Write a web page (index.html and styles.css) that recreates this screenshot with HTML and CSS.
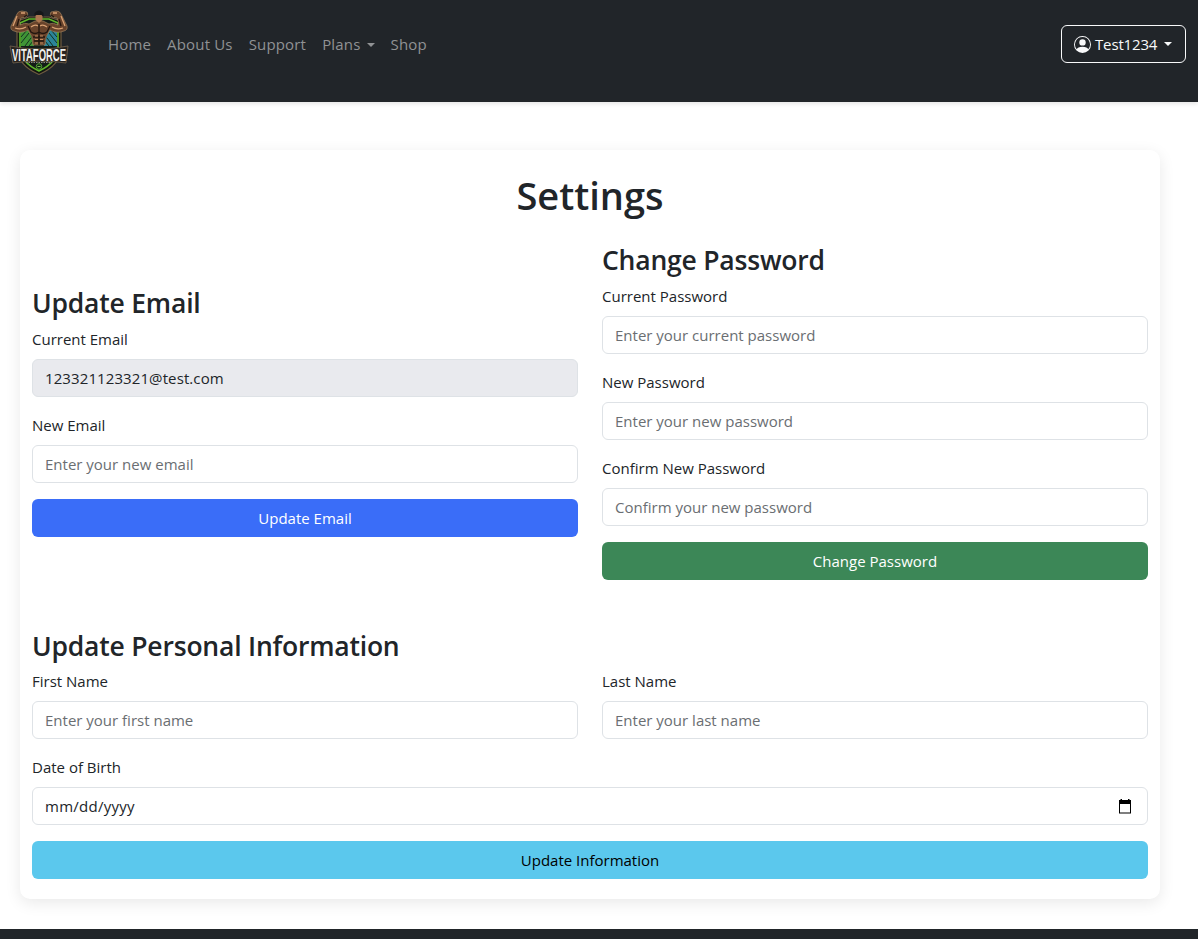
FILE: index.html
```html
<!DOCTYPE html>
<html lang="en">
<head>
<meta charset="utf-8">
<title>Settings</title>
<link rel="stylesheet" href="styles.css">
</head>
<body>
<header class="navbar">
  <a class="brand" href="#">
    <svg class="logo" viewBox="0 0 60 66" width="60" height="66">
      <path d="M8 12 L20 8 H40 L52 12 V38 Q52 56 30 65.500 Q8 56 8 38 Z" fill="#11170f" stroke="#6f5a40" stroke-width="1.2"/>
      <path d="M11 14 L20 10 H40 L49 14 V38 Q49 53 30 62 Q11 53 11 38 Z" fill="#131c17" stroke="#5fb62b" stroke-width="1.600"/>
      <path d="M12 22 L20 20 L25 37 H12 Z" fill="#3f9436"/>
      <path d="M48 22 L40 20 L35 37 H48 Z" fill="#2b8499"/>
      <path d="M12 34l8-10M12 28l6-7M16 37l6-8M20 37l4-5M48 34l-8-10M48 28l-6-7M44 37l-6-8M40 37l-4-5" stroke="#14301f" stroke-width="1"/>
      <path d="M8 5 Q9 2 13 2 L18 3 Q20 5 17 8 L12 9 Q10 12 11 16 Q16 13 20 15 L26 12 H34 L40 15 Q44 13 49 16 Q50 12 48 9 L43 8 Q40 5 42 3 L47 2 Q51 2 52 5 L58 17 Q59 21 55 22 Q48 25 41 21 L37 28 L36 36 H24 L23 28 L19 21 Q12 25 5 22 Q1 21 2 17 Z" fill="#68432b" stroke="#a98a63" stroke-width=".6"/>
      <path d="M8 7L4 17M52 7l4 10M6 19q6 2 11-1M54 19q-6 2-11-1M22 18q4-3 7-1M38 18q-4-3-7-1M12 4h4M48 4h-4" fill="none" stroke="#d9a173" stroke-width="1.3"/>
      <path d="M10 10L8 17M50 10l2 7M19 17l3 6q4 3 8 0 4 3 8 0l3-6M30 15v21M24 28h12M25 32h10M18 6l-3 2M42 6l3 2" fill="none" stroke="#22160f" stroke-width="1.3"/>
      <path d="M26 27h3M31 27h3M26 30.500h3M31 30.500h3M26 34h3M31 34h3" stroke="#c48b5e" stroke-width="1.2"/>
      <path d="M26.500 4h7v7L30 14l-3.500-3z" fill="#ad7750"/>
      <path d="M25.500 7V4q4.500-5 9 0v4l-2-2h-5z" fill="#151719"/>
      <path d="M1 37 Q30 43 59 37 L57 54 Q30 50 4 54 Z" fill="#28231f" stroke="#74634e" stroke-width=".8"/>
      <text class="logo-name" x="3" y="51.500" textLength="54" lengthAdjust="spacingAndGlyphs">VITAFORCE</text>
      <path d="M17 53.500h26" stroke="#8a877e" stroke-width="1" stroke-dasharray="1.500 1"/>
      <circle cx="30" cy="57.500" r="2.800" fill="#102c13" stroke="#519e34"/>
      <path d="M28.500 57.500h3" stroke="#7bbb50"/>
    </svg>
  </a>
  <nav class="nav">
    <a class="nav-link" href="#">Home</a>
    <a class="nav-link" href="#">About Us</a>
    <a class="nav-link" href="#">Support</a>
    <a class="nav-link caret" href="#">Plans</a>
    <a class="nav-link" href="#">Shop</a>
  </nav>
  <button class="user caret">
    <svg width="17" height="17" viewBox="0 0 16 16" fill="currentColor"><path d="M11 6a3 3 0 1 1-6 0 3 3 0 0 1 6 0"/><path fill-rule="evenodd" d="M0 8a8 8 0 1 1 16 0A8 8 0 0 1 0 8m8-7a7 7 0 0 0-5.468 11.37C3.242 11.226 4.805 10 8 10s4.757 1.225 5.468 2.37A7 7 0 0 0 8 1"/></svg>
    <span>Test1234</span>
  </button>
</header>
<main class="card">
  <h1 class="title">Settings</h1>
  <div class="columns">
    <section>
      <h2 class="heading">Update Email</h2>
      <label class="label">Current Email</label>
      <input class="field disabled" value="123321123321@test.com" readonly>
      <label class="label">New Email</label>
      <input class="field" placeholder="Enter your new email">
      <button class="btn primary">Update Email</button>
    </section>
    <section>
      <h2 class="heading">Change Password</h2>
      <label class="label">Current Password</label>
      <input class="field" placeholder="Enter your current password">
      <label class="label">New Password</label>
      <input class="field" placeholder="Enter your new password">
      <label class="label">Confirm New Password</label>
      <input class="field" placeholder="Confirm your new password">
      <button class="btn success">Change Password</button>
    </section>
  </div>
  <section class="personal">
    <h2 class="heading">Update Personal Information</h2>
    <div class="columns">
      <div>
        <label class="label">First Name</label>
        <input class="field" placeholder="Enter your first name">
      </div>
      <div>
        <label class="label">Last Name</label>
        <input class="field" placeholder="Enter your last name">
      </div>
    </div>
    <label class="label">Date of Birth</label>
    <div class="field date">
      <span>mm/dd/yyyy</span>
      <svg width="12" height="15" viewBox="0 0 12 15"><path d="M1.500 0h1.500v1h6V0h1.500v1H12v13.500H0V1h1.500zM1 5v8.500h10V5z" fill="#000" fill-rule="evenodd"/></svg>
    </div>
    <button class="btn info">Update Information</button>
  </section>
</main>
<footer class="footer"></footer>
</body>
</html>
```
FILE: styles.css
```css
* { box-sizing: border-box; }
body {
  margin: 0;
  height: 939px;
  overflow: hidden;
  background: #fff;
  color: #212529;
  font: 400 15px/24px "Open Sans", "Noto Sans", sans-serif;
}
.navbar {
  display: flex;
  align-items: flex-start;
  height: 102px;
  padding: 9px 12px 0 9px;
  background: #212529;
  box-shadow: 0 2px 4px rgba(0, 0, 0, .1);
}
.brand { display: flex; width: 91px; }
.logo { overflow: visible; }
.logo-name { font: 700 17px/20px "Liberation Sans", sans-serif; fill: #f1f0ed; }
.nav { display: flex; flex: 1; padding-top: 15px; }
.nav-link { padding: 8px; color: #909294; letter-spacing: .17px; text-decoration: none; }
.caret::after {
  content: "";
  display: inline-block;
  margin-left: 7px;
  vertical-align: 3px;
  border: 4.800px solid transparent;
  border-top-color: currentColor;
  border-bottom: 0;
}
.nav .caret { margin-right: -1px; }
.user {
  display: flex;
  align-items: center;
  width: 125px;
  height: 38px;
  margin-top: 16px;
  padding: 0 12px;
  border: 1px solid #f8f9fa;
  border-radius: 6px;
  background: transparent;
  color: #f8f9fa;
  font: inherit;
  letter-spacing: -.15px;
}
.user svg { flex: none; }
.user span { margin-left: 4px; }
.card {
  width: 1140px;
  height: 749px;
  margin: 48px 0 30px 20px;
  padding: 20px 12px;
  border-radius: 10px;
  background: #fff;
  box-shadow: 0 4px 16px rgba(0, 0, 0, .09);
}
.title { margin: 0 0 23px; padding-top: 1px; font-size: 38px; font-weight: 600; line-height: 48px; text-align: center; }
.columns { display: grid; grid-template-columns: 1fr 1fr; column-gap: 24px; align-items: center; }
.heading { margin: 0 0 6px; padding-top: 2px; font-size: 26.500px; font-weight: 600; line-height: 33.600px; letter-spacing: -.2px; }
.label { display: block; margin-bottom: 8px; }
.field {
  display: block;
  width: 100%;
  height: 38px;
  margin: 0 0 16px;
  padding: 6px 12px;
  border: 1px solid #dee2e6;
  border-radius: 6px;
  background: #fff;
  color: #212529;
  font: inherit;
  outline: 0;
}
.field::placeholder { color: #6a6e72; opacity: 1; }
.disabled { background: #e9eaee; letter-spacing: .1px; }
.date { display: flex; align-items: center; justify-content: space-between; padding-right: 16px; letter-spacing: .25px; }
.btn { display: block; width: 100%; height: 38px; padding: 0; border: 0; border-radius: 6px; color: #fff; font: inherit; }
.primary { background: #3a6df8; }
.success { background: #3c8757; }
.info { background: #5bc8ed; color: #000; }
.personal { margin-top: 48px; }
.footer { height: 10px; background: #212529; }
```
